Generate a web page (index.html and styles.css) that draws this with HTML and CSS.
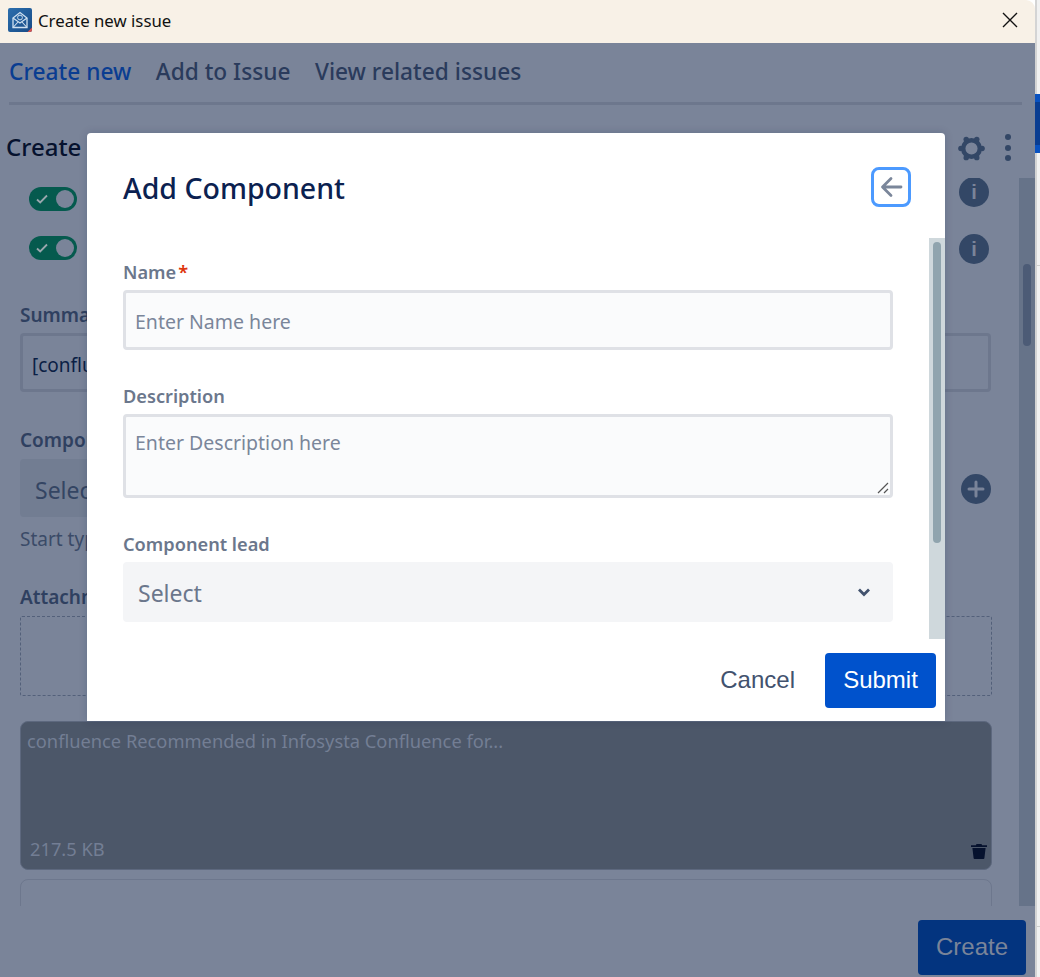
FILE: index.html
```html
<!DOCTYPE html>
<html lang="en">
<head>
<meta charset="utf-8">
<title>Create new issue</title>
<link rel="stylesheet" href="styles.css">
</head>
<body>
<div class="edge"><span class="edge-blue"></span><span class="edge-line"></span><span class="edge-line lower"></span></div>
<div class="window">
  <header class="titlebar">
    <svg class="logo" viewBox="0 0 24 24"><defs><linearGradient id="lg" x1="0" y1="0" x2="1" y2="1"><stop offset="0" stop-color="#2c6fae"/><stop offset="1" stop-color="#174a86"/></linearGradient></defs><rect width="24" height="24" rx="2" fill="url(#lg)"/><path d="M19.500 24H22a2 2 0 0 0 2-2v-2.500z" fill="#d9534f"/><path d="M5 10l7-5.500 7 5.500v9.500H5z" fill="none" stroke="#cfe0f0" stroke-width="1.300"/><path d="M5 10l7 5 7-5M5 19.500l5-5.500M19 19.500l-5-5.500" fill="none" stroke="#cfe0f0" stroke-width="1.100"/><circle cx="12" cy="9.500" r="2.400" fill="none" stroke="#cfe0f0"/></svg>
    <span class="window-title">Create new issue</span>
    <svg class="close" viewBox="0 0 16 16"><path d="M1 1l14 14M15 1L1 15" stroke="#111" stroke-width="1.400" fill="none"/></svg>
  </header>
  <div class="panel">
    <nav class="tabs">
      <span class="tab active">Create new</span>
      <span class="tab">Add to Issue</span>
      <span class="tab">View related issues</span>
    </nav>
    <div class="heading-row">
      <h2 class="heading">Create issue</h2>
      <svg class="gear" viewBox="0 0 28 28"><circle cx="14" cy="14" r="8.600" fill="none" stroke="#334766" stroke-width="4.600"/><g fill="#334766"><circle cx="25" cy="14" r="2.800"/><circle cx="3" cy="14" r="2.800"/><circle cx="19.500" cy="4.500" r="2.800"/><circle cx="8.500" cy="4.500" r="2.800"/><circle cx="19.500" cy="23.500" r="2.800"/><circle cx="8.500" cy="23.500" r="2.800"/></g></svg>
      <span class="kebab"><i></i><i></i><i></i></span>
    </div>
    <div class="scroller">
      <div class="form">
        <div class="toggle-row">
          <span class="toggle low"><svg viewBox="0 0 14 12"><path d="M2 6.500l3.200 3L12 2.500" fill="none" stroke="#9aa7ae" stroke-width="1.800"/></svg><b></b></span>
          <span class="info">i</span>
        </div>
        <div class="toggle-row second">
          <span class="toggle high"><svg viewBox="0 0 14 12"><path d="M2 6.500l3.200 3L12 2.500" fill="none" stroke="#9aa7ae" stroke-width="1.800"/></svg><b></b></span>
          <span class="info">i</span>
        </div>
        <div class="bg-label summary-label">Summary</div>
        <div class="bg-input">[confluence]</div>
        <div class="bg-label comp-label">Components</div>
        <div class="bg-select-row">
          <div class="bg-select">Select</div>
          <svg class="plus" viewBox="0 0 30 30"><circle cx="15" cy="15" r="15" fill="#334766"/><path d="M15 8v14M8 15h14" stroke="#7a8499" stroke-width="3" stroke-linecap="round"/></svg>
        </div>
        <div class="bg-help">Start typing</div>
        <div class="bg-label attach-label">Attachment</div>
        <div class="dropzone"></div>
        <div class="file-card">
          <div class="file-name">confluence Recommended in Infosysta Confluence for...</div>
          <div class="file-foot">
            <span>217.5 KB</span>
            <svg class="trash" viewBox="0 0 16 16"><path d="M5.500 1h5l.6 1.200H16v1.900H0V2.200h4.900zM1.400 5h13.200l-1.200 10a1 1 0 0 1-1 1H3.600a1 1 0 0 1-1-1z" fill="#06122e"/></svg>
          </div>
        </div>
        <div class="file-card empty"></div>
      </div>
      <div class="scrollbar"><span class="thumb"></span></div>
    </div>
    <footer class="panel-foot"><span class="create-btn">Create</span></footer>
  </div>

  <section class="modal">
    <div class="modal-head">
      <h1 class="modal-title">Add Component</h1>
      <span class="back"><svg viewBox="0 0 24 24"><path d="M22 12H4M12 3.500L3.500 12l8.500 8.500" fill="none" stroke="#7a869a" stroke-width="2.800" stroke-linecap="round" stroke-linejoin="round"/></svg></span>
    </div>
    <div class="modal-scroller">
      <div class="modal-form">
        <label class="m-label first">Name<em>*</em></label>
        <div class="m-input">Enter Name here</div>
        <label class="m-label desc">Description</label>
        <div class="m-textarea">Enter Description here
          <svg class="grip" viewBox="0 0 12 12"><path d="M1 11L11 1M7 11l4-4" stroke="#555" stroke-width="1.200" fill="none"/></svg>
        </div>
        <label class="m-label lead">Component lead</label>
        <div class="m-select"><span>Select</span><svg viewBox="0 0 14 10"><path d="M2 2.500l5 5 5-5" fill="none" stroke="#42526e" stroke-width="2.800"/></svg></div>
      </div>
      <div class="m-scrollbar"><span class="m-thumb"></span></div>
    </div>
    <div class="modal-foot">
      <span class="cancel">Cancel</span>
      <span class="submit">Submit</span>
    </div>
  </section>
</div>
</body>
</html>
```
FILE: styles.css
```css
* { box-sizing: border-box; }
html, body { margin: 0; height: 100%; overflow: hidden; }
body { background: #fff; font-family: "Noto Sans", "Open Sans", sans-serif; display: flex; flex-direction: row-reverse; }
.edge { width: 5px; flex: none; padding-top: 94px; background: #f1f1f1; border-left: 2px solid #d4d4d4; }
.edge-blue { display: block; height: 59px; margin-left: -2px; background: linear-gradient(#0a52c0 0 8px, #0a3d91 8px 51px, #0a52c0 51px); }
.edge-line { display: block; height: 1px; margin-top: 112px; background: #cfcfcf; }
.edge-line.lower { margin-top: 660px; }
.window { position: relative; width: 1035px; height: 977px; flex: none; display: flex; flex-direction: column; border-top-right-radius: 9px; overflow: hidden; }

.titlebar { height: 43px; flex: none; background: #f8f1e7; display: flex; align-items: center; padding: 0 17px 3px 8px; }
.logo { width: 24px; height: 24px; flex: none; }
.window-title { margin-left: 6px; font-size: 16.800px; color: #111; }
.close { width: 16px; height: 16px; margin-left: auto; }

.panel { flex: 1; min-height: 0; background: #7a8499; display: flex; flex-direction: column; }
.tabs { height: 62px; flex: none; margin: 0 13px 0 9px; display: flex; align-items: center; gap: 24.500px; border-bottom: 3px solid #6d778d; padding-bottom: 2px; }
.tab { font-size: 22.700px; font-weight: 500; color: #2a3b5c; }
.tab.active { color: #0a3d91; }
.heading-row { height: 73px; flex: none; display: flex; align-items: flex-start; padding: 25px 24px 0 6px; }
.heading { margin: 1px 0 0; font-size: 24px; font-weight: 500; line-height: 32px; color: #06122e; }
.gear { width: 27px; height: 27px; margin-left: auto; margin-right: 20px; margin-top: 5px; }
.kebab { display: flex; flex-direction: column; gap: 4.500px; margin-top: 4px; }
.kebab i { width: 6px; height: 6px; border-radius: 50%; background: #334766; }

.scroller { height: 728px; flex: none; display: flex; }
.form { flex: 1; min-width: 0; padding: 0 28px 0 20px; overflow: hidden; }
.toggle-row { height: 30px; display: flex; align-items: center; justify-content: space-between; padding-left: 9px; width: 969px; margin-top: -1px; }
.toggle-row.second { margin-top: 27px; }
.toggle { width: 48px; height: 24px; border-radius: 12px; background: #055a4e; display: flex; align-items: center; justify-content: space-between; padding: 0 3px 0 6px; }
.toggle.low { margin-top: 14px; }
.toggle.high { margin-top: -2px; }
.toggle svg { width: 14px; height: 12px; }
.toggle b { width: 18px; height: 18px; border-radius: 50%; background: #7a8499; }
.info { width: 30px; height: 30px; border-radius: 50%; background: #334766; color: #7a8499; font: 700 20px/30px "Liberation Sans", sans-serif; text-align: center; }
.bg-label { font-size: 19px; font-weight: 600; color: #2f4060; line-height: 26px; }
.summary-label { margin-top: 38px; }
.bg-input { width: 971px; height: 59px; margin-top: 5px; border: 3px solid #6d778d; border-radius: 4px; padding-left: 9px; font-size: 19px; line-height: 59px; color: #0b1f45; }
.comp-label { margin-top: 35px; }
.bg-select-row { display: flex; width: 971px; justify-content: space-between; align-items: center; margin-top: 6px; }
.bg-select { width: 900px; height: 58px; border-radius: 4px; background: #727d92; padding: 2px 0 0 15px; font-size: 23px; line-height: 58px; color: #344563; }
.plus { width: 30px; height: 30px; margin-top: 2px; }
.bg-help { font-size: 19px; line-height: 26px; margin-top: 9px; color: #3b4b68; }
.attach-label { margin-top: 32px; }
.dropzone { width: 972px; height: 80px; margin-top: 6px; border: 1px dashed #53607a; border-radius: 2px; }
.file-card { width: 972px; height: 149px; margin-top: 25px; border-radius: 8px; background: #4c5769; border: 1px solid #5d687e; display: flex; flex-direction: column; justify-content: space-between; padding: 5px 4px 6px 6px; color: #737e94; font-size: 18.300px; }
.file-name { line-height: 28px; white-space: nowrap; }
.file-foot { display: flex; justify-content: space-between; align-items: flex-end; padding-left: 3px; line-height: 28px; }
.trash { width: 16px; height: 16px; margin-bottom: 4px; }
.file-card.empty { height: 60px; margin-top: 9px; background: none; border-color: #6d778d; }
.scrollbar { width: 16px; flex: none; background: #667389; padding: 86px 4px 0; }
.thumb { display: block; height: 82px; border-radius: 4px; background: #4c5b76; }

.panel-foot { flex: 1; display: flex; justify-content: flex-end; align-items: flex-start; padding: 14px 9px 0 0; }
.create-btn { width: 108px; height: 55px; border-radius: 4px; background: #03347f; color: #7a8499; font: 24px/53px "Liberation Sans", sans-serif; text-align: center; }

.modal { position: absolute; left: 87px; top: 133px; width: 858px; height: 588px; background: #fff; border-radius: 4px 4px 0 0; box-shadow: 0 0 8px rgba(9,30,66,.18); display: flex; flex-direction: column; }
.modal-head { height: 105px; flex: none; display: flex; justify-content: space-between; align-items: flex-start; padding: 34px 34px 0 36px; }
.modal-title { margin: -1px 0 0; font-size: 28.500px; font-weight: 500; line-height: 44px; color: #0b2150; }
.back { width: 40px; height: 40px; border: 3px solid #4c9aff; border-radius: 8px; display: flex; align-items: center; justify-content: center; }
.back svg { width: 24px; height: 24px; }
.modal-scroller { height: 401px; flex: none; display: flex; }
.modal-form { flex: 1; min-width: 0; padding: 0 36px; overflow: hidden; }
.m-label { display: block; font-size: 18.200px; font-weight: 600; line-height: 24px; color: #6b778c; }
.m-label em { color: #de350b; font-style: normal; margin-left: 2px; }
.m-label.first { margin-top: 22px; }
.m-input { margin-top: 6px; height: 60px; border: 3px solid #dfe1e6; border-radius: 4px; background: #fafbfc; padding-left: 9px; font-size: 19.500px; line-height: 57px; color: #7a869a; }
.m-label.desc { margin-top: 34px; }
.m-textarea { position: relative; margin-top: 6px; height: 84px; border: 3px solid #dfe1e6; border-radius: 4px; background: #fafbfc; padding-left: 9px; font-size: 19.500px; line-height: 51px; color: #7a869a; }
.grip { position: absolute; right: 1px; bottom: 1px; width: 12px; height: 12px; }
.m-label.lead { margin-top: 34px; }
.m-select { margin-top: 6px; height: 60px; border-radius: 4px; background: #f4f5f7; display: flex; align-items: center; justify-content: space-between; padding: 2px 22px 0 15px; font-size: 23px; color: #6b778c; }
.m-select svg { width: 14px; height: 10px; margin-top: -2px; }
.m-scrollbar { width: 16px; flex: none; background: #cfd8dc; padding: 4px 4px 0; }
.m-thumb { display: block; height: 301px; border-radius: 4px; background: #90a4ae; }
.modal-foot { flex: 1; display: flex; justify-content: flex-end; align-items: flex-start; padding: 14px 9px 0 0; }
.cancel { font: 24px/53px "Liberation Sans", sans-serif; color: #42526e; margin-right: 30px; }
.submit { width: 111px; height: 55px; border-radius: 4px; background: #0052cc; color: #fff; font: 24px/53px "Liberation Sans", sans-serif; text-align: center; }
```
